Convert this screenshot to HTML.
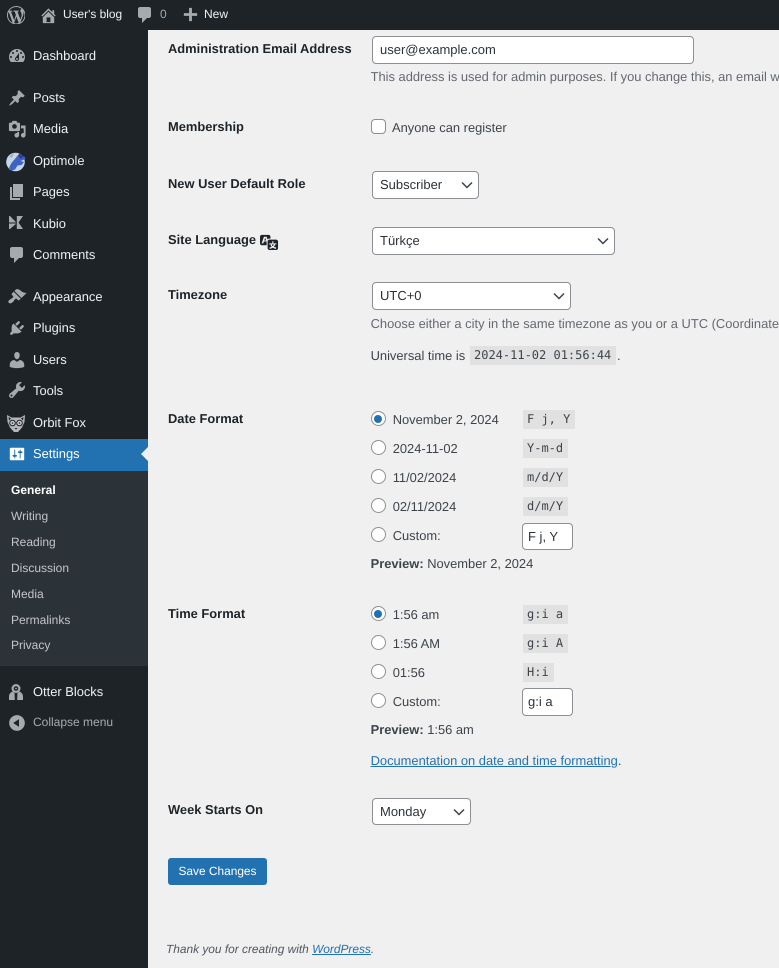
<!DOCTYPE html>
<html><head><meta charset="utf-8"><style>
html,body{margin:0;padding:0;width:779px;height:968px;overflow:hidden;background:#f0f0f1}
body{position:relative;font-family:"Liberation Sans",sans-serif;font-size:12.9px;color:#3c434a;text-rendering:geometricPrecision}
.t{position:absolute;line-height:18px;white-space:nowrap}
.b{font-weight:700;color:#1d2327}
.m{color:#f0f0f1}
.s{color:#c3c4c7;font-size:12px;left:11px}
.d{color:#646970;overflow:hidden}
.bar{position:absolute;left:0;top:0;width:779px;height:30px;background:#1d2327}
.side{position:absolute;left:0;top:30px;width:148px;height:938px;background:#1d2327}
svg.i{position:absolute;width:20px;height:20px;fill:#a7aaad}
.box{position:absolute;box-sizing:border-box;background:#fff;border:1px solid #8c8f94;border-radius:4px;color:#2c3338;font-size:13px;padding-left:7px}
.box svg{position:absolute;right:4px;top:50%;margin-top:-7px;width:14px;height:14px;fill:none;stroke:#3c434a;stroke-width:1.5}
.r{position:absolute;box-sizing:border-box;width:15px;height:15px;left:370.6px;background:#fff;border:1px solid #8c8f94;border-radius:50%}
.r.on:after{content:"";position:absolute;left:2.5px;top:2.5px;width:8px;height:8px;border-radius:50%;background:#2271b1}
code{position:absolute;font-family:"DejaVu Sans Mono",monospace;font-size:12px;background:#e1e1e2;color:#3c434a;line-height:19px;height:19px;padding:0 5px 0 4px;white-space:pre}
a{color:#2271b1;text-decoration:underline}
</style></head><body>
<div class="bar"></div>
<svg class="i" style="left:6.5px;top:5.5px;width:18.500px;height:18.500px" viewBox="0 0 20 20"><path d="M20 10c0-5.51-4.49-10-10-10C4.48 0 0 4.49 0 10c0 5.52 4.48 10 10 10 5.51 0 10-4.48 10-10zM7.78 15.37L4.37 6.22c.55-.02 1.17-.08 1.17-.08.5-.06.44-1.13-.06-1.11 0 0-1.45.11-2.37.11-.18 0-.37 0-.58-.01C4.12 2.69 6.87 1.11 10 1.11c2.33 0 4.45.87 6.05 2.34-.68-.11-1.65.39-1.65 1.58 0 .74.45 1.36.9 2.1.35.61.55 1.36.55 2.46 0 1.49-1.4 5-1.4 5l-3.03-8.37c.54-.02.82-.17.82-.17.5-.05.44-1.25-.06-1.22 0 0-1.44.12-2.38.12-.87 0-2.33-.12-2.33-.12-.5-.03-.56 1.2-.06 1.22l.92.08 1.26 3.41zM17.41 10c.24-.64.74-1.87.43-4.25.7 1.29 1.05 2.71 1.05 4.25 0 3.29-1.73 6.24-4.4 7.78.97-2.59 1.94-5.2 2.92-7.78zM6.1 18.09C3.12 16.65 1.11 13.53 1.11 10c0-1.3.23-2.48.72-3.59C3.25 10.3 4.67 14.2 6.1 18.09zm4.03-6.63l2.58 6.98c-.86.29-1.76.45-2.71.45-.79 0-1.57-.11-2.29-.33.81-2.38 1.62-4.74 2.42-7.1z"/></svg>
<svg class="i" style="left:39px;top:5.5px;width:19px;height:19px" viewBox="0 0 20 20"><path d="M16 8.500l1.530 1.530-1.060 1.060L10 4.620l-6.470 6.470-1.060-1.060L10 2.500l4 4v-2h2v4zm-6-2.460l6 5.990V18H4v-5.970zM12 17v-5H8v5h4z"/></svg>
<div class="t" style="left:63px;top:5px;font-size:11.9px;color:#f0f0f1">User's blog</div>
<svg class="i" style="left:135px;top:5px" viewBox="0 0 20 20"><path d="M5 2h9c1.100 0 2 .9 2 2v7c0 1.100-.9 2-2 2h-2l-5 5v-5H5c-1.100 0-2-.9-2-2V4c0-1.100.9-2 2-2z"/></svg>
<div class="t" style="left:160px;top:5px;font-size:12px;color:#a7aaad">0</div>
<svg class="i" style="left:181px;top:4.5px;width:19px;height:19px" viewBox="0 0 20 20"><path d="M17 8.500v3h-5.500v5.500h-3v-5.500H3v-3h5.500V3h3v5.500z"/></svg>
<div class="t" style="left:204px;top:5px;font-size:12px;color:#f0f0f1">New</div>

<div class="side"></div>
<div style="position:absolute;left:0;top:439px;width:148px;height:32px;background:#2271b1"></div>
<div style="position:absolute;left:0;top:471px;width:148px;height:195px;background:#2c3338"></div>
<div style="position:absolute;left:141px;top:446px;width:0;height:0;border:8px solid transparent;border-right-color:#f0f0f1;border-left:0"></div>

<svg class="i" style="left:7px;top:46px" viewBox="0 0 20 20"><path d="M3.760 16h12.480c1.100-1.370 1.760-3.110 1.760-5 0-4.420-3.580-8-8-8s-8 3.580-8 8c0 1.890.66 3.630 1.760 5zM10 4c.55 0 1 .45 1 1s-.45 1-1 1-1-.45-1-1 .45-1 1-1zM6 6c.55 0 1 .45 1 1s-.45 1-1 1-1-.45-1-1 .45-1 1-1zm8 0c.55 0 1 .45 1 1s-.45 1-1 1-1-.45-1-1 .45-1 1-1zm-5.370 5.550L12 7v6c0 1.100-.9 2-2 2s-2-.9-2-2c0-.57.24-1.080.63-1.450zM4 10c.55 0 1 .45 1 1s-.45 1-1 1-1-.45-1-1 .45-1 1-1zm12 0c.55 0 1 .45 1 1s-.45 1-1 1-1-.45-1-1 .45-1 1-1zm-5 3c0-.55-.45-1-1-1s-1 .45-1 1 .45 1 1 1 1-.45 1-1z"/></svg>
<div class="t m" style="left:33px;top:47px">Dashboard</div>
<svg class="i" style="left:8px;top:89px;width:18px;height:18px" viewBox="0 0 20 20"><path d="M10.440 3.020l1.820-1.820 6.360 6.350-1.830 1.820c-1.050-.68-2.480-.57-3.410.36l-.75.75c-.92.93-1.040 2.350-.35 3.410l-1.830 1.820-2.410-2.410-2.800 2.790c-.42.42-3.380 2.710-3.800 2.290s1.860-3.390 2.280-3.810l2.790-2.790L4.100 9.360l1.830-1.820c1.050.69 2.480.57 3.400-.36l.75-.75c.93-.92 1.050-2.350.36-3.410z"/></svg>
<div class="t m" style="left:33px;top:89px">Posts</div>
<svg class="i" style="left:7.5px;top:120px;width:18.500px;height:18.500px" viewBox="0 0 20 20"><path d="M13 11V4c0-.55-.45-1-1-1h-1.670L9 1H5L3.670 3H2c-.55 0-1 .45-1 1v7c0 .55.45 1 1 1h10c.55 0 1-.45 1-1zM7 4.500c1.380 0 2.500 1.120 2.500 2.500S8.380 9.500 7 9.500 4.500 8.380 4.500 7 5.620 4.500 7 4.500zM14 6h5v10.500c0 1.380-1.120 2.500-2.500 2.500S14 17.880 14 16.500s1.120-2.500 2.500-2.500c.17 0 .34.02.5.05V9h-3V6zm-4 8.050V13h2v3.500c0 1.380-1.120 2.500-2.500 2.500S7 17.880 7 16.500 8.120 14 9.500 14c.17 0 .34.02.5.05z"/></svg>
<div class="t m" style="left:33px;top:120px">Media</div>
<svg style="position:absolute;left:6px;top:152px;width:20px;height:20px" viewBox="0 0 20 20"><circle cx="9.500" cy="10" r="9.300" fill="#c4d6e8"/><path d="M3 18C3 14 6 10 8.500 7.500l3-3.500 2-3 2 2 3 1.500 1 2.500-5 2 3.500 1-2.500 3-4 .5-2.500 4-3 1z" fill="#3f62c6"/><path d="M13.500 1.500l2 2 2.500 1-3 2-2.500-2z" fill="#24408a"/><circle cx="11.500" cy="4.500" r=".9" fill="#d9435a"/><path d="M3.500 4.500c1-1 2.500-2.500 4.500-3L5.500 6z" fill="#1d2327" opacity=".25"/></svg>
<div class="t m" style="left:33px;top:152px">Optimole</div>
<svg class="i" style="left:7px;top:182px" viewBox="0 0 20 20"><path d="M6 15V2h10v13H6zm-1 1h8v2H3V5h2v11z"/></svg>
<div class="t m" style="left:33px;top:183px">Pages</div>
<svg class="i" style="left:7px;top:214px" viewBox="0 0 20 20"><path d="M2 2h1L8.800 8v.5H2zM2 9.500h6.800v.500L3 15H2zM9.800 2H16L11.500 8.500 16 15H9.800z"/></svg>
<div class="t m" style="left:33px;top:215px">Kubio</div>
<svg class="i" style="left:7px;top:245px" viewBox="0 0 20 20"><path d="M5 2h9c1.100 0 2 .9 2 2v7c0 1.100-.9 2-2 2h-2l-5 5v-5H5c-1.100 0-2-.9-2-2V4c0-1.100.9-2 2-2z"/></svg>
<div class="t m" style="left:33px;top:246px">Comments</div>
<svg class="i" style="left:7px;top:287px" viewBox="0 0 20 20"><path d="M14.480 11.060L7.410 3.990l1.500-1.500c.5-.56 2.300-.47 3.510.32 1.210.8 1.430 1.280 2.910 2.100 1.180.64 2.450 1.260 4.450.85zm-.71.71L6.700 4.700 4.930 6.470c-.39.39-.39 1.020 0 1.410l1.060 1.060c.39.39.39 1.030 0 1.420-.6.6-1.430 1.110-2.210 1.690-.35.26-.7.53-1.010.84C1.430 13.230.91 14.870 1.860 15.820s2.590.43 3.940-.72c.31-.31.58-.66.84-1.010.58-.78 1.090-1.610 1.690-2.210.39-.39 1.020-.39 1.410 0l1.060 1.060c.39.39 1.020.39 1.410 0z"/></svg>
<div class="t m" style="left:33px;top:288px">Appearance</div>
<svg class="i" style="left:7.5px;top:319px;width:18px;height:18px" viewBox="0 0 20 20"><path d="M13.110 4.360L9.870 7.600 8 5.730l3.240-3.240c.35-.34 1.050-.2 1.560.32.52.51.66 1.210.31 1.550zm-8 1.770l.91-1.120 9.010 9.010-1.190.84c-.71.71-2.630 1.160-3.820 1.160H6.140L4.900 17.260c-.59.59-1.540.59-2.120 0-.59-.58-.59-1.530 0-2.120l1.240-1.240v-3.880c0-1.130.4-3.190 1.090-3.890zm7.260 3.970l3.240-3.240c.34-.35 1.040-.21 1.550.31.52.51.66 1.210.31 1.550l-3.240 3.250z"/></svg>
<div class="t m" style="left:33px;top:319px">Plugins</div>
<svg class="i" style="left:7px;top:350px" viewBox="0 0 20 20"><path d="M10 9.250c-2.270 0-2.730-3.440-2.730-3.440C7 4.020 7.820 2 9.970 2c2.160 0 2.980 2.020 2.710 3.810 0 0-.41 3.440-2.680 3.440zm0 2.570L12.720 10c2.390 0 4.520 2.330 4.520 4.530v2.490s-3.650 1.130-7.240 1.130c-3.650 0-7.240-1.130-7.240-1.130v-2.490c0-2.250 1.940-4.480 4.470-4.480z"/></svg>
<div class="t m" style="left:33px;top:351px">Users</div>
<svg class="i" style="left:7px;top:380px" viewBox="0 0 20 20"><path d="M16.680 9.770c-1.340 1.340-3.300 1.670-4.950.99l-5.410 6.520c-.99.99-2.590.99-3.580 0s-.99-2.590 0-3.570l6.520-5.420c-.68-1.650-.35-3.610.99-4.950 1.280-1.280 3.120-1.620 4.720-1.060l-2.890 2.890 2.820 2.820 2.860-2.870c.53 1.580.18 3.390-1.080 4.650zM3.810 16.210c.4.39 1.040.39 1.430 0 .4-.4.4-1.040 0-1.430-.39-.4-1.030-.4-1.430 0-.39.39-.39 1.030 0 1.430z"/></svg>
<div class="t m" style="left:33px;top:382px">Tools</div>
<svg style="position:absolute;left:6px;top:414px;width:20px;height:20px" viewBox="0 0 20 20"><path d="M1 1l4.500 2.500h9L19 1l-.5 7-2.500 5.500-4 4.500H8L4 13.500 1.500 8z" fill="#b4b6b9"/><path d="M2.500 3l2.500 1.500-2 2zM17.500 3L15 4.500l2 2z" fill="#1d2327"/><circle cx="6.500" cy="9" r="2.800" fill="#c9cacc" stroke="#1d2327" stroke-width="1"/><circle cx="13.500" cy="9" r="2.800" fill="#c9cacc" stroke="#1d2327" stroke-width="1"/><circle cx="6.500" cy="9" r=".8" fill="#1d2327"/><circle cx="13.500" cy="9" r=".8" fill="#1d2327"/><path d="M8.500 14h3L10 15.500z" fill="#1d2327"/></svg>
<div class="t m" style="left:33px;top:414px">Orbit Fox</div>
<svg class="i" style="left:8.2px;top:444.5px;width:18px;height:18px;fill:#fff" viewBox="0 0 20 20"><path d="M18 16V4c0-.55-.45-1-1-1H3c-.55 0-1 .45-1 1v12c0 .55.45 1 1 1h14c.55 0 1-.45 1-1zM8 11h1c.55 0 1 .45 1 1s-.45 1-1 1H8v1.500c0 .28-.22.5-.5.5s-.5-.22-.5-.5V13H6c-.55 0-1-.45-1-1s.45-1 1-1h1V5.500c0-.28.22-.5.5-.5s.5.22.5.5V11zm5-2h-1c-.55 0-1-.45-1-1s.45-1 1-1h1V5.500c0-.28.22-.5.5-.5s.5.22.5.5V7h1c.55 0 1 .45 1 1s-.45 1-1 1h-1v5.500c0 .28-.22.5-.5.5s-.5-.22-.5-.5V9z"/></svg>
<div class="t" style="left:33px;top:445px;color:#fff">Settings</div>
<div class="t s" style="top:481px;color:#fff;font-weight:700">General</div>
<div class="t s" style="top:507px">Writing</div>
<div class="t s" style="top:533px">Reading</div>
<div class="t s" style="top:559px">Discussion</div>
<div class="t s" style="top:585px">Media</div>
<div class="t s" style="top:611px">Permalinks</div>
<div class="t s" style="top:636px">Privacy</div>
<svg style="position:absolute;left:6px;top:682px;width:20px;height:20px" viewBox="0 0 20 20"><circle cx="10" cy="6.500" r="4.500" fill="#a7aaad"/><circle cx="10" cy="6.500" r="2.300" fill="#1d2327"/><circle cx="10" cy="6.500" r=".9" fill="#a7aaad"/><path d="M3 18v-3.500c0-2.500 1.500-4 3.500-5L8.500 11l.3 7zM17 18v-3.500c0-2.500-1.500-4-3.500-5L11.500 11l-.3 7z" fill="#a7aaad"/></svg>
<div class="t" style="left:33px;top:683px;color:#f0f0f1">Otter Blocks</div>
<svg class="i" style="left:7px;top:713px" viewBox="0 0 20 20"><path d="M10 2.160c4.330 0 7.840 3.510 7.840 7.840s-3.510 7.840-7.840 7.840S2.160 14.330 2.160 10 5.710 2.160 10 2.160zm2 11.720V6.120L6.180 9.970z"/></svg>
<div class="t" style="left:33px;top:713px;font-size:12px;color:#a7aaad">Collapse menu</div>

<div class="t b" style="left:168px;top:40px">Administration Email Address</div>
<div class="box" style="left:372px;top:36px;width:322px;height:28px;line-height:26px">user@example.com</div>
<div class="t d" style="left:370.6px;top:68px;width:408.4px">This address is used for admin purposes. If you change this, an email will be sent to your new address to confirm it.</div>

<div class="t b" style="left:168px;top:118px">Membership</div>
<div style="position:absolute;box-sizing:border-box;left:370.6px;top:119px;width:15px;height:15px;background:#fff;border:1px solid #8c8f94;border-radius:4px"></div>
<div class="t" style="left:392px;top:119px">Anyone can register</div>

<div class="t b" style="left:168px;top:175px">New User Default Role</div>
<div class="box" style="left:372px;top:171px;width:107px;height:28px;line-height:26px">Subscriber<svg viewBox="0 0 14 14"><path d="M2 4.500l5 5 5-5"/></svg></div>

<div class="t b" style="left:168px;top:231px">Site Language</div>
<svg style="position:absolute;left:260px;top:232px;width:19px;height:19px;fill:#1d2327" viewBox="0 0 20 20"><path d="M11 7H9.490c-.63 0-1.250.3-1.590.7L7 5H4.130l-2.390 7h1.690l.74-2H7v4H2c-1.100 0-2-.9-2-2V5c0-1.100.9-2 2-2h7c1.100 0 2 .9 2 2v2zM6.510 9H4.490l1-2.930zM10 8h7c1.100 0 2 .9 2 2v7c0 1.100-.9 2-2 2h-7c-1.100 0-2-.9-2-2v-7c0-1.100.9-2 2-2zm7.250 5v-1.080h-3.170V9.750h-1.160v2.170H9.750V13h1.280c.11.85.56 1.850 1.280 2.620-.87.36-1.890.62-2.310.62-.01.02.22.97.2 1.460.84 0 2.210-.5 3.280-1.150 1.090.65 2.480 1.150 3.340 1.150-.02-.49.2-1.440.2-1.460-.43 0-1.490-.26-2.380-.63.7-.77 1.140-1.770 1.250-2.610h1.280zm-3.810 1.930c-.5-.46-.85-1.130-1.010-1.930h2.090c-.17.8-.51 1.470-1 1.930l-.04.03s-.03-.02-.04-.03z"/></svg>
<div class="box" style="left:372px;top:227px;width:243px;height:28px;line-height:26px">Türkçe<svg viewBox="0 0 14 14"><path d="M2 4.500l5 5 5-5"/></svg></div>

<div class="t b" style="left:168px;top:286px">Timezone</div>
<div class="box" style="left:372px;top:282px;width:199px;height:28px;line-height:26px">UTC+0<svg viewBox="0 0 14 14"><path d="M2 4.500l5 5 5-5"/></svg></div>
<div class="t d" style="left:370.6px;top:315px;width:408.4px">Choose either a city in the same timezone as you or a UTC (Coordinated Universal Time) time offset.</div>
<div class="t" style="left:370.6px;top:347px">Universal time is</div>
<code style="left:470px;top:346px">2024-11-02 01:56:44</code>
<div class="t" style="left:617px;top:347px">.</div>

<div class="t b" style="left:168px;top:410px">Date Format</div>
<div class="r on" style="top:411px"></div><div class="t" style="left:392.7px;top:411px">November 2, 2024</div><code style="left:523px;top:410px">F j, Y</code>
<div class="r" style="top:440px"></div><div class="t" style="left:392.7px;top:440px">2024-11-02</div><code style="left:523px;top:439px">Y-m-d</code>
<div class="r" style="top:469px"></div><div class="t" style="left:392.7px;top:469px">11/02/2024</div><code style="left:523px;top:468px">m/d/Y</code>
<div class="r" style="top:498px"></div><div class="t" style="left:392.7px;top:498px">02/11/2024</div><code style="left:523px;top:497px">d/m/Y</code>
<div class="r" style="top:527px"></div><div class="t" style="left:392.7px;top:527px">Custom:</div>
<div class="box" style="left:522px;top:523px;width:51px;height:27px;line-height:25px;padding-left:5px">F j, Y</div>
<div class="t" style="left:370.6px;top:555px"><b>Preview:</b> November 2, 2024</div>

<div class="t b" style="left:168px;top:605px">Time Format</div>
<div class="r on" style="top:606px"></div><div class="t" style="left:392.7px;top:606px">1:56 am</div><code style="left:523px;top:605px">g:i a</code>
<div class="r" style="top:635px"></div><div class="t" style="left:392.7px;top:635px">1:56 AM</div><code style="left:523px;top:634px">g:i A</code>
<div class="r" style="top:664px"></div><div class="t" style="left:392.7px;top:664px">01:56</div><code style="left:523px;top:663px">H:i</code>
<div class="r" style="top:693px"></div><div class="t" style="left:392.7px;top:693px">Custom:</div>
<div class="box" style="left:522px;top:688px;width:51px;height:28px;line-height:26px;padding-left:5px">g:i a</div>
<div class="t" style="left:370.6px;top:721px"><b>Preview:</b> 1:56 am</div>
<div class="t" style="left:370.6px;top:752px"><a href="#">Documentation on date and time formatting</a>.</div>

<div class="t b" style="left:168px;top:801px">Week Starts On</div>
<div class="box" style="left:372px;top:798px;width:99px;height:27px;line-height:25px">Monday<svg viewBox="0 0 14 14"><path d="M2 4.500l5 5 5-5"/></svg></div>

<div style="position:absolute;left:168px;top:858px;width:99px;height:27px;background:#2271b1;border-radius:3px;color:#fff;font-size:11.9px;line-height:27px;text-align:center">Save Changes</div>
<div class="t" style="left:166px;top:940px;font-size:11.9px;font-style:italic;color:#50575e">Thank you for creating with <a href="#">WordPress</a>.</div>
</body></html>
